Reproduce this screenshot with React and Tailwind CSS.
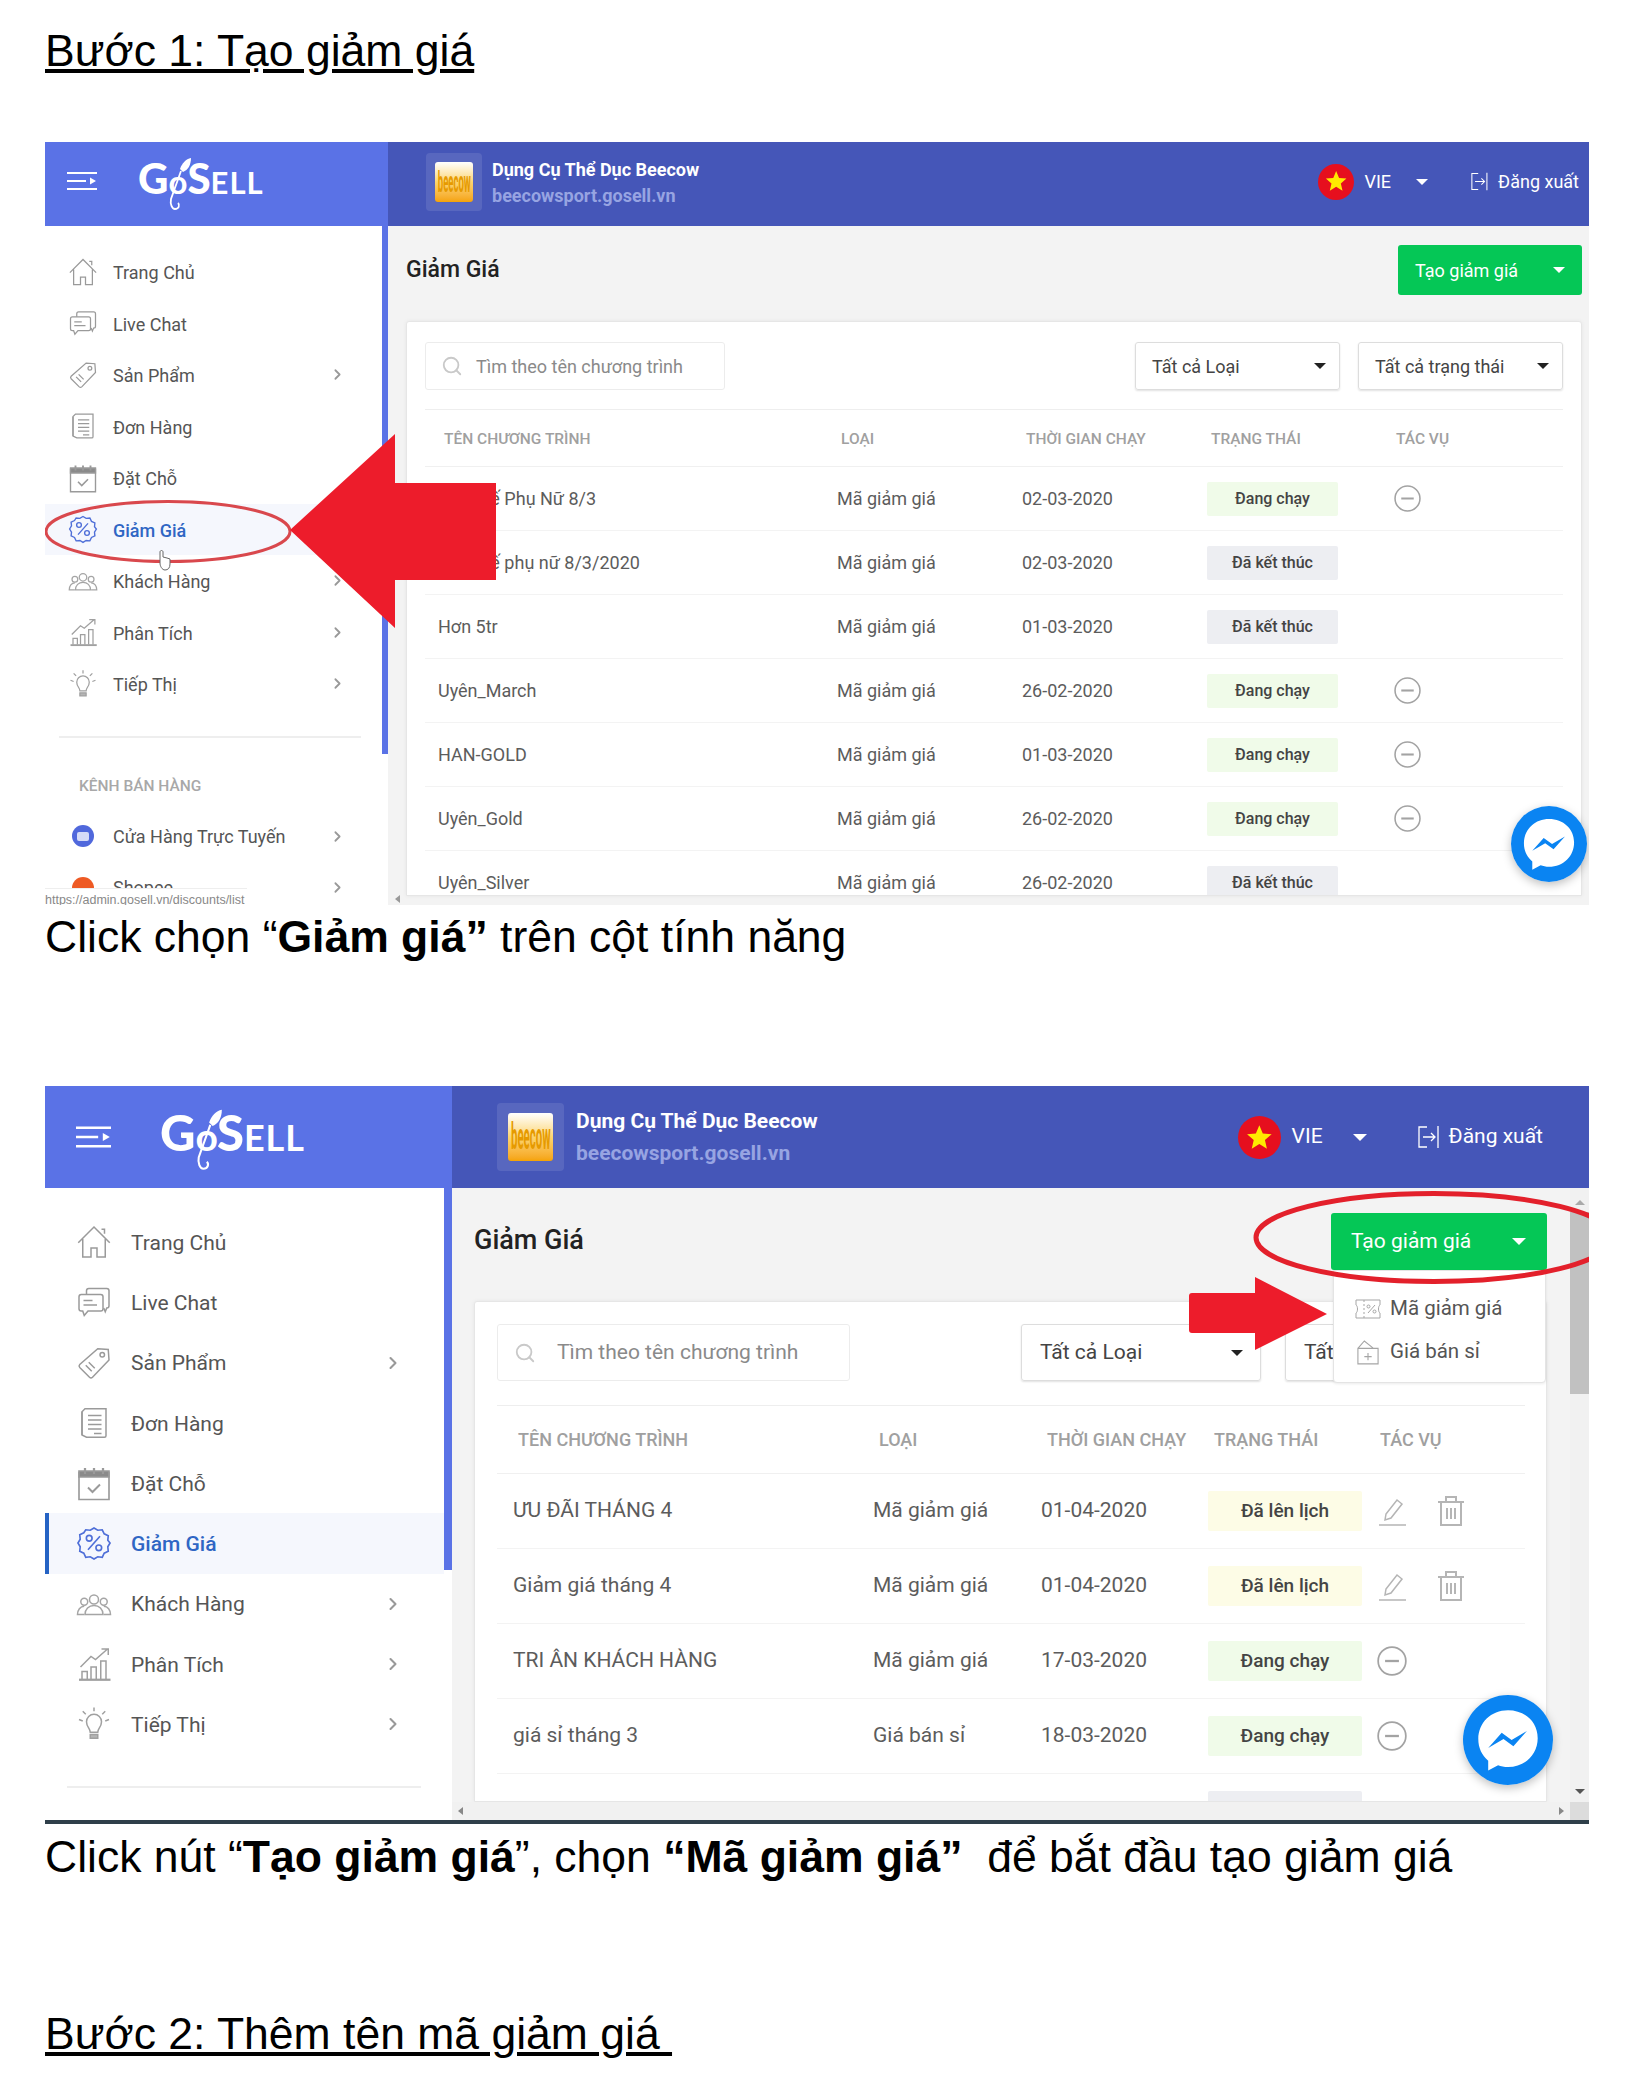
import React from 'react'
import { ChevronRight, Search } from 'lucide-react'

const roboto = "font-['Roboto',sans-serif]"

// the two screenshots are the same admin page at two zoom levels
const small = {
  shell: 'h-[763px]',
  header: 'h-[84px]',
  headerLeft: 'w-[343px]',
  burger: 'ml-[22px] w-[30px] h-[24px] mb-[6px]',
  logo: 'ml-[41px] w-[130px] mt-[2px]',
  g: 'text-[42px]', o: 'text-[33px]', ell: 'text-[31px] tracking-[1px]', rocket: 'w-[26px] h-[56px] -ml-[21px] -mr-[5px]',
  shopWrap: 'ml-[38px] w-[56px] h-[58px] mr-[10px] mb-[5px]',
  shopImg: 'w-[38px] h-[40px]', shopText: 'text-[10px]',
  shopName: 'text-[18px] leading-[26px] mb-[3px]',
  lang: 'mr-[10px] text-[18px] mb-[5px]',
  flag: 'w-[36px] h-[36px] mr-[10px]', caretHead: 'ml-[25px] mr-[42px]', logoutIcon: 'w-[18px] h-[19px] mr-[10px]',
  sidebar: 'w-[337px] pt-[20px]',
  bar: 'w-[6px] h-[528px]',
  row: 'h-[51.5px] text-[18px]',
  rowIcon: 'ml-[23px] mr-[15px] w-[30px] h-[30px]',
  rowText: 'pt-[2px]',
  chev: 'ml-auto mr-[36px] w-[17px] h-[17px]',
  sideList: 'w-[337px]',
  rule: 'ml-[14px] w-[302px] mt-[26px]',
  mainPad: 'pl-[18px] pr-[7px] pt-[19px] pb-[9px]',
  title: 'text-[23px]',
  button: 'w-[184px] h-[50px] text-[18px] pl-[17px] pr-[17px]',
  card: 'mt-[26px] pt-[20px]',
  cardInner: 'pl-[18px] pr-[18px]',
  controls: 'h-[48px] pb-0',
  search: 'w-[300px] text-[18px]',
  searchIcon: 'ml-[15px] mr-[13px] w-[22px] h-[22px]',
  select: 'w-[205px] ml-[18px] text-[18px] pl-[16px] pr-[13px]',
  headRule: 'mt-[19px]',
  headRow: 'h-[57px] pt-[3px] text-[15.5px] pl-[19px] grid-cols-[397px_185px_185px_185px_1fr]',
  bodyRow: 'h-[64px] text-[18px] pl-[13px] grid-cols-[399px_185px_185px_187px_1fr]',
  badge: 'w-[131px] h-[34px] text-[16px]',
  minus: 'w-[27px] h-[27px]',
  caretBig: 'border-x-[6px] border-t-[6px]',
}

const large = {
  shell: 'h-[734px]',
  header: 'h-[102px]',
  headerLeft: 'w-[407px]',
  burger: 'ml-[30px] w-[37px] h-[28px]',
  logo: 'ml-[48px] w-[152px] mt-[7px]',
  g: 'text-[49px]', o: 'text-[39px]', ell: 'text-[36px] tracking-[1px]', rocket: 'w-[30px] h-[66px] -ml-[25px] -mr-[6px]',
  shopWrap: 'ml-[45px] w-[67px] h-[68px] mr-[12px]',
  shopImg: 'w-[45px] h-[48px]', shopText: 'text-[12px]',
  shopName: 'text-[21px] leading-[32px]',
  lang: 'mr-[46px] text-[21px]',
  flag: 'w-[43px] h-[43px] mr-[11px]', caretHead: 'ml-[30px] mr-[50px]', logoutIcon: 'w-[22px] h-[24px] mr-[10px]',
  sidebar: 'w-[399px] pt-[24px]',
  bar: 'w-[8px] h-[382px]',
  row: 'h-[60.25px] text-[21px]',
  rowIcon: 'ml-[31px] mr-[19px] w-[36px] h-[36px]',
  rowText: 'pt-[3px]',
  chev: 'ml-auto mr-[41px] w-[20px] h-[20px]',
  sideList: 'w-[399px]',
  rule: 'ml-[22px] w-[354px] mt-[32px]',
  mainPad: 'pl-[22px] pr-[23px] pt-[25px]',
  title: 'text-[27px] -mt-[2px]',
  button: 'w-[216px] h-[57px] text-[21px] pl-[20px] pr-[21px]',
  card: 'mt-[31px] pt-[22px]',
  cardInner: 'pl-[22px] pr-[21px]',
  controls: 'h-[57px]',
  search: 'w-[353px] text-[21px]',
  searchIcon: 'ml-[16px] mr-[21px] w-[22px] h-[22px]',
  select: 'w-[240px] ml-[24px] text-[21px] pl-[18px] pr-[17px]',
  headRule: 'mt-[24px]',
  headRow: 'h-[68px] text-[18px] pl-[21px] grid-cols-[361px_168px_167px_166px_1fr]',
  bodyRow: 'h-[75px] text-[21px] pl-[16px] grid-cols-[360px_168px_167px_169px_1fr]',
  badge: 'w-[154px] h-[40px] text-[19px]',
  minus: 'w-[30px] h-[30px]',
  caretBig: 'border-x-[7px] border-t-[7px]',
}

function HomeIcon({ className }) {
  return <svg viewBox="0 0 24 24" fill="none" stroke="#9a9a9a" strokeWidth="1" className={className}><path d="M1.500 12.500 12 2l10.500 10.500M4.500 10v12h5.500v-6h4v6h5.500V10M17 3.500h2v3" /></svg>
}
function ChatIcon({ className }) {
  return <svg viewBox="0 0 24 24" fill="none" stroke="#9a9a9a" strokeWidth="1" className={className}><path d="M7 7V4.500A1.500 1.500 0 0 1 8.500 3h12A1.500 1.500 0 0 1 22 4.500v10a1.500 1.500 0 0 1-1.500 1.500l-1 2.500-1-2.500" /><path d="M3.500 7h13A1.500 1.500 0 0 1 18 8.500v8a1.500 1.500 0 0 1-1.500 1.500H8l-2.500 3-1-3h-1A1.500 1.500 0 0 1 2 16.500v-8A1.500 1.500 0 0 1 3.500 7Z" /><path d="M5 11h6M5 14h9" /></svg>
}
function TagIcon({ className }) {
  return <svg viewBox="0 0 24 24" fill="none" stroke="#9a9a9a" strokeWidth="1" className={className}><path d="M14.500 2.500 21.500 3l.5 7L11 21.500a1.500 1.500 0 0 1-2 0L2.500 15a1.500 1.500 0 0 1 0-2Z" /><circle cx="17.500" cy="6.500" r="1.500" /><path d="m6.500 13.500 4 4M8.500 11.500l4 4" /></svg>
}
function DocsIcon({ className }) {
  return <svg viewBox="0 0 24 24" fill="none" stroke="#9a9a9a" strokeWidth="1" className={className}><path d="M6 2.500h14v18a1 1 0 0 1-1 1H7l-3-1.500V4.500Z" /><path d="M4 4.500v15.500M8 7h9M8 10h9M8 13h9M8 16h9M12 19h5" /></svg>
}
function CalendarIcon({ className }) {
  return <svg viewBox="0 0 24 24" fill="none" stroke="#9a9a9a" strokeWidth="1.100" className={className}><path d="M2 5h20v18H2Z" /><path d="M2 4h20v4H2Z" fill="#8a8a8a" /><path d="M6 2v4M12 2v4M18 2v4" strokeWidth="1.500" /><path d="m8 15 3 3 5-5" strokeWidth="1.300" /></svg>
}
function PeopleIcon({ className }) {
  return <svg viewBox="0 0 24 24" fill="none" stroke="#a5a5a5" strokeWidth="1" className={className}><circle cx="12" cy="9" r="3" /><circle cx="5.500" cy="10.500" r="2.300" /><circle cx="18.500" cy="10.500" r="2.300" /><path d="M6 19c0-3.500 2.500-6 6-6s6 2.500 6 6Z" /><path d="M5.500 19H1c0-3 1.800-5.500 4.500-5.500M18.500 19H23c0-3-1.800-5.500-4.500-5.500" /></svg>
}
function ChartIcon({ className }) {
  return <svg viewBox="0 0 24 24" fill="none" stroke="#a0a0a0" strokeWidth="1" className={className}><path d="M2 22.500h21" strokeWidth="1.500" /><path d="M4 22v-5h3.500v5M10 22v-8h3.500v8M16.500 22V10H20v12" /><path d="m3 14 7-7 3 2 8-7M17 2h4.500v4" /></svg>
}
function BulbIcon({ className }) {
  return <svg viewBox="0 0 24 24" fill="none" stroke="#a0a0a0" strokeWidth="1" className={className}><path d="M9.500 17.500c0-2.500-2.500-3.500-2.500-7a5 5 0 0 1 10 0c0 3.500-2.500 4.500-2.500 7Z" /><path d="M9.500 19h5v2.500h-5Z" fill="#b5b5b5" /><path d="M12 1v2.500M4.500 3.500l2 2M19.500 3.500l-2 2M2 9l2.500 1M22 9l-2.500 1" /></svg>
}
function PercentIcon({ className }) {
  return (
    <svg viewBox="0 0 24 24" fill="none" stroke="#4f6fd8" strokeWidth="1.100" className={className}>
      <path d="M12 2l2.500 1.500 3-.3 1.300 2.700 2.700 1.300-.3 3L22.700 12l-1.500 2.500.3 3-2.700 1.300-1.300 2.700-3-.3L12 22.700l-2.500-1.500-3 .3-1.300-2.700-2.700-1.300.3-3L1.300 12l1.500-2.500-.3-3 2.700-1.300L6.500 3.200l3 .3Z" />
      <path d="m8 16.500 8-9" />
      <circle cx="8.800" cy="8.800" r="1.900" />
      <circle cx="15.200" cy="15.200" r="1.900" />
    </svg>
  )
}
function StoreDot({ className }) {
  return <div className={`${className} flex items-center justify-center`}><div className="w-[22px] h-[22px] rounded-full bg-[#5068dc] flex items-center justify-center"><div className="w-[12px] h-[9px] rounded-[2px] bg-[#d5dbf7]" /></div></div>
}
function ShopeeDot({ className }) {
  return <div className={`${className} flex items-center justify-center`}><div className="w-[22px] h-[22px] rounded-full bg-[#ee5a24]" /></div>
}

const menu = [
  ['Trang Chủ', HomeIcon, false],
  ['Live Chat', ChatIcon, false],
  ['Sản Phẩm', TagIcon, true],
  ['Đơn Hàng', DocsIcon, false],
  ['Đặt Chỗ', CalendarIcon, false],
  ['Giảm Giá', PercentIcon, false],
  ['Khách Hàng', PeopleIcon, true],
  ['Phân Tích', ChartIcon, true],
  ['Tiếp Thị', BulbIcon, true],
]

function Caret({ color = 'border-t-white', className = 'border-x-[6px] border-t-[6px]' }) {
  return <span className={`inline-block w-0 h-0 border-x-transparent ${className} ${color}`} />
}

function Logo({ s }) {
  return (
    <div className={`flex items-baseline text-white font-black font-['Lato',sans-serif] ${s.logo}`}>
      <span className={`${s.g} leading-none`}>G</span>
      <span className={`${s.o} leading-none font-bold`}>o</span>
      <svg viewBox="0 0 26 56" fill="none" className={`${s.rocket} self-center`}>
        <path d="M25 1c-5 1-9 5-11 11l3 3c5-2 8-7 8-14Z" fill="white" />
        <path d="M15 14 5 42c-1 5 1 10 4 10 4 0 5-4 3-6" stroke="white" strokeWidth="1.800" />
      </svg>
      <span className={`${s.g} leading-none`}>S</span>
      <span className={`${s.ell} leading-none font-bold`}>ELL</span>
    </div>
  )
}

function ShopLogo({ s }) {
  return (
    <div className={`${s.shopWrap} rounded-[4px] bg-white/10 flex items-center justify-center`}>
      <div className={`${s.shopImg} rounded-[3px] bg-gradient-to-b from-white via-[#fcd56e] to-[#f5a300] overflow-hidden flex items-center justify-center`}>
        <span className={`${s.shopText} font-bold text-[#e69a00] [transform:scale(0.95,3)]`}>beecow</span>
      </div>
    </div>
  )
}

function Header({ s }) {
  return (
    <div className={`${s.header} flex shrink-0 ${roboto}`}>
      <div className={`${s.headerLeft} bg-[#5a72e6] flex items-center`}>
        <svg viewBox="0 0 30 24" fill="none" stroke="white" strokeWidth="2.200" className={s.burger}>
          <path d="M0 4h30M0 12h19M0 20h30" />
          <path d="m23 8.500 6 3.500-6 3.500Z" fill="white" stroke="none" />
        </svg>
        <Logo s={s} />
      </div>
      <div className="flex-1 bg-[#4556b8] flex items-center">
        <ShopLogo s={s} />
        <div className={`${s.shopName} font-bold`}>
          <div className="text-white">Dụng Cụ Thể Dục Beecow</div>
          <div className="text-[#97a4e2]">beecowsport.gosell.vn</div>
        </div>
        <div className={`ml-auto flex items-center text-white ${s.lang}`}>
          <div className={`${s.flag} rounded-full bg-[#e60f1e] flex items-center justify-center`}>
            <svg viewBox="0 0 20 20" className="w-[62%] h-[62%]"><path d="m10 1 2.600 6.100 6.600.6-5 4.300 1.500 6.500L10 15l-5.700 3.500L5.800 12l-5-4.300 6.600-.6Z" fill="#ffeb00" /></svg>
          </div>
          <span>VIE</span>
          <span className={`${s.caretHead} flex`}><Caret className={s.caretBig} /></span>
          <svg viewBox="0 0 22 24" fill="none" stroke="white" strokeWidth="1.300" className={s.logoutIcon}>
            <path d="M10 2H2v20h8M21 1v22M6 12h12M14 8l4 4-4 4" />
          </svg>
          <span>Đăng xuất</span>
        </div>
      </div>
    </div>
  )
}

function Sidebar({ s, active, children }) {
  return (
    <div className={`${s.sidebar} shrink-0 bg-white overflow-hidden flex ${roboto}`}>
      <div className={s.sideList}>
        {menu.map(([label, Icon, more]) => {
          const on = label === 'Giảm Giá'
          return (
            <div key={label} className={`${s.row} flex items-center ${on ? 'bg-[#f5f7fd] text-[#2f66c4] font-medium' : 'text-[#555]'} ${on && active ? 'shadow-[inset_4px_0_0_#2563c4]' : ''}`}>
              <Icon className={`${s.rowIcon} shrink-0`} />
              <span className={s.rowText}>{label}</span>
              {more && <ChevronRight className={s.chev} color="#999" strokeWidth={2.500} />}
            </div>
          )
        })}
        <div className={`${s.rule} h-[2px] bg-[#eeeeee]`} />
        {children}
      </div>
    </div>
  )
}

function Badge({ status, s }) {
  const tone = {
    'Đang chạy': 'bg-[#f0fbe9]',
    'Đã kết thúc': 'bg-[#edeef2]',
    'Đã lên lịch': 'bg-[#fdfce6]',
  }[status]
  return <div className={`${s.badge} ${tone} rounded-[2px] flex items-center justify-center font-medium text-[#444]`}>{status}</div>
}

function Minus({ s }) {
  return (
    <svg viewBox="0 0 26 26" fill="none" stroke="#a3a3a3" strokeWidth="1.500" className={s.minus}>
      <circle cx="13" cy="13" r="12" />
      <path d="M7 13h12" strokeWidth="2" />
    </svg>
  )
}

function EditDelete() {
  return (
    <div className="flex items-center gap-[29px]">
      <svg viewBox="0 0 30 30" fill="none" stroke="#b5b5b5" strokeWidth="1.500" className="w-[30px] h-[30px]">
        <path d="m9 18 11-14 5 4-11 14-6 2ZM2 29h27" />
      </svg>
      <svg viewBox="0 0 30 30" fill="none" stroke="#b5b5b5" strokeWidth="2" className="w-[30px] h-[30px]">
        <path d="M2 6h26M10 6V1h10v5M5 6v23h20V6M11 12v11M19 12v11M15 12v11" />
      </svg>
    </div>
  )
}

function Panel({ s, rows, selectTwo }) {
  return (
    <div className={`${s.card} flex-1 min-h-0 overflow-hidden bg-white border border-[#e6e6e6] rounded-t-[3px] shadow-[0_0_4px_rgba(0,0,0,0.06)]`}>
      <div className={s.cardInner}>
        <div className={`${s.controls} flex`}>
          <div className={`${s.search} border border-[#ececec] rounded-[3px] flex items-center text-[#8a8a8a]`}>
            <Search className={s.searchIcon} color="#c9c9c9" strokeWidth={2} />
            <span>Tìm theo tên chương trình</span>
          </div>
          <div className={`${s.select} ml-auto border border-[#dddddd] rounded-[3px] shadow-[0_1px_2px_rgba(0,0,0,0.12)] flex items-center justify-between text-[#444]`}>
            <span>Tất cả Loại</span>
            <Caret color="border-t-[#222]" />
          </div>
          <div className={`${s.select} border border-[#dddddd] rounded-[3px] shadow-[0_1px_2px_rgba(0,0,0,0.12)] flex items-center justify-between text-[#444]`}>
            <span>{selectTwo}</span>
            <Caret color="border-t-[#222]" />
          </div>
        </div>
        <div className={`${s.headRule} h-[1px] bg-[#eeeeee]`} />
        <div className={`${s.headRow} grid items-center font-medium text-[#a0a0a0] border-b border-[#f0f0f0]`}>
          <span>TÊN CHƯƠNG TRÌNH</span>
          <span>LOẠI</span>
          <span>THỜI GIAN CHẠY</span>
          <span>TRẠNG THÁI</span>
          <span>TÁC VỤ</span>
        </div>
        {rows.map(([name, type, date, status, action], i) => (
          <div key={i} className={`${s.bodyRow} grid items-center text-[#5c5c5c] border-b border-[#f3f3f3]`}>
            <span>{name}</span>
            <span>{type}</span>
            <span>{date}</span>
            <Badge status={status} s={s} />
            <div className="flex items-center">
              {action === 'stop' && <Minus s={s} />}
              {action === 'edit' && <EditDelete />}
            </div>
          </div>
        ))}
      </div>
    </div>
  )
}

function Messenger({ className }) {
  return (
    <div className={`${className} absolute rounded-full shadow-[0_3px_10px_rgba(0,0,0,0.25)]`}>
      <svg viewBox="0 0 100 100" className="w-full h-full">
        <circle cx="50" cy="50" r="50" fill="#0a84f2" />
        <path d="M50 17C31 17 17 31 17 49c0 10 4 18 11 24v11l11-6c3 1 7 2 11 2 19 0 33-14 33-32S69 17 50 17Z" fill="white" />
        <path d="m28 59 15-17 11 8 17-10-15 17-11-8Z" fill="#0a84f2" />
      </svg>
    </div>
  )
}

const rowsOne = [
  ['Quốc tế Phụ Nữ 8/3', 'Mã giảm giá', '02-03-2020', 'Đang chạy', 'stop'],
  ['Quốc tế phụ nữ 8/3/2020', 'Mã giảm giá', '02-03-2020', 'Đã kết thúc'],
  ['Hơn 5tr', 'Mã giảm giá', '01-03-2020', 'Đã kết thúc'],
  ['Uyên_March', 'Mã giảm giá', '26-02-2020', 'Đang chạy', 'stop'],
  ['HAN-GOLD', 'Mã giảm giá', '01-03-2020', 'Đang chạy', 'stop'],
  ['Uyên_Gold', 'Mã giảm giá', '26-02-2020', 'Đang chạy', 'stop'],
  ['Uyên_Silver', 'Mã giảm giá', '26-02-2020', 'Đã kết thúc'],
]

const rowsTwo = [
  ['ƯU ĐÃI THÁNG 4', 'Mã giảm giá', '01-04-2020', 'Đã lên lịch', 'edit'],
  ['Giảm giá tháng 4', 'Mã giảm giá', '01-04-2020', 'Đã lên lịch', 'edit'],
  ['TRI ÂN KHÁCH HÀNG', 'Mã giảm giá', '17-03-2020', 'Đang chạy', 'stop'],
  ['giá sỉ tháng 3', 'Giá bán sỉ', '18-03-2020', 'Đang chạy', 'stop'],
  ['', '', '', 'Đã kết thúc'],
]

function TitleRow({ s }) {
  return (
    <div className="flex items-center justify-between shrink-0">
      <span className={`${s.title} font-medium text-[#222]`}>Giảm Giá</span>
      <div className={`${s.button} bg-[#05c756] rounded-[3px] text-white flex items-center justify-between`}>
        <span>Tạo giảm giá</span>
        <Caret className={s.caretBig} />
      </div>
    </div>
  )
}

function ShotOne() {
  const s = small
  return (
    <div className={`${s.shell} relative overflow-hidden flex flex-col`}>
      <Header s={s} />
      <div className={`flex-1 min-h-0 flex ${roboto}`}>
        <Sidebar s={s}>
          <div className="pl-[34px] pt-[40px] text-[15.5px] leading-[16px] font-medium text-[#a8a8a8]">KÊNH BÁN HÀNG</div>
          <div className={`${s.row} mt-[17px] flex items-center text-[#555]`}>
            <StoreDot className={`${s.rowIcon} shrink-0`} />
            <span>Cửa Hàng Trực Tuyến</span>
            <ChevronRight className={s.chev} color="#999" strokeWidth={2.500} />
          </div>
          <div className={`${s.row} flex items-center text-[#555]`}>
            <ShopeeDot className={`${s.rowIcon} shrink-0`} />
            <span>Shopee</span>
            <ChevronRight className={s.chev} color="#999" strokeWidth={2.500} />
          </div>
        </Sidebar>
        <div className={`${s.bar} bg-[#5a72e6] shrink-0`} />
        <div className={`flex-1 min-w-0 bg-[#f3f3f3] flex flex-col ${s.mainPad}`}>
          <TitleRow s={s} />
          <Panel s={s} rows={rowsOne} selectTwo="Tất cả trạng thái" />
        </div>
      </div>
      <div className="absolute left-0 bottom-0 w-[202px] h-[17px] bg-white border-t border-[#eeeeee] overflow-hidden text-[12.5px] leading-[22px] text-[#888] font-['Liberation_Sans',sans-serif]">https://admin.gosell.vn/discounts/list</div>
      <span className="absolute left-[350px] bottom-[2px] w-0 h-0 border-y-[4px] border-y-transparent border-r-[5px] border-r-[#999]" />
      <svg viewBox="0 0 1544 763" fill="none" className="absolute inset-0 w-full h-full">
        <ellipse cx="123" cy="389.500" rx="122" ry="30" stroke="#d9484d" strokeWidth="3" />
        <path d="M245 388 350 292v49h101v97H350v48Z" fill="#ed1c2b" />
        <path d="M115 410v11c0 3 2 7 5 7s5-2 5-6v-5l-3-1-4-1v-5c0-2-3-2-3 0Z" fill="white" stroke="#666" strokeWidth="1" />
      </svg>
      <Messenger className="left-[1466px] top-[664px] w-[76px] h-[76px]" />
    </div>
  )
}

function ShotTwo() {
  const s = large
  return (
    <div className={`${s.shell} relative overflow-hidden flex flex-col`}>
      <Header s={s} />
      <div className={`flex-1 min-h-0 flex ${roboto}`}>
        <Sidebar s={s} active />
        <div className={`${s.bar} bg-[#5a72e6] shrink-0`} />
        <div className="flex-1 min-w-0 flex flex-col">
          <div className={`flex-1 min-h-0 bg-[#f3f3f3] flex flex-col ${s.mainPad}`}>
            <TitleRow s={s} />
            <Panel s={s} rows={rowsTwo} selectTwo="Tất" />
          </div>
          <div className="h-[18px] shrink-0 bg-[#f1f1f1] flex items-center justify-between px-[6px]">
            <span className="w-0 h-0 border-y-[4px] border-y-transparent border-r-[5px] border-r-[#888]" />
            <span className="w-0 h-0 border-y-[4px] border-y-transparent border-l-[5px] border-l-[#888]" />
          </div>
        </div>
        <div className="w-[19px] shrink-0 bg-[#f1f1f1] flex flex-col items-center">
          <span className="mt-[12px] w-0 h-0 border-x-[5px] border-x-transparent border-b-[5px] border-b-[#aaa]" />
          <div className="mt-[7px] w-full h-[182px] bg-[#c1c1c1]" />
          <span className="mt-auto mb-[8px] w-0 h-0 border-x-[5px] border-x-transparent border-t-[5px] border-t-[#555]" />
          <div className="w-full h-[18px] bg-[#dcdcdc]" />
        </div>
      </div>
      <div className={`absolute left-[1288px] top-[184px] w-[213px] h-[113px] bg-white border border-[#e4e4e4] rounded-b-[4px] shadow-[0_1px_3px_rgba(0,0,0,0.08)] pt-[16px] text-[20.5px] text-[#555] ${roboto}`}>
        <div className="flex items-center h-[43px]">
          <svg viewBox="0 0 26 20" fill="none" stroke="#a5a5a5" strokeWidth="1" className="ml-[21px] mr-[9px] w-[26px] h-[20px]">
            <path d="M1 1h24v5c-2 1-2 7 0 8v5H1v-5c2-1 2-7 0-8Z" />
            <path d="M9 1v18" strokeDasharray="2 2" />
            <path d="m13 14 7-8" />
            <circle cx="13.500" cy="7.500" r="1.500" />
            <circle cx="19.500" cy="12.500" r="1.500" />
          </svg>
          <span>Mã giảm giá</span>
        </div>
        <div className="flex items-center h-[43px]">
          <svg viewBox="0 0 24 28" fill="none" stroke="#a5a5a5" strokeWidth="1.200" className="ml-[23px] mr-[11px] w-[22px] h-[28px]">
            <path d="M1 10h22v17H1ZM1 10l7-8 10 8" />
            <path d="M8 19h8M12 15v8" />
          </svg>
          <span>Giá bán sỉ</span>
        </div>
      </div>
      <svg viewBox="0 0 1544 734" fill="none" className="absolute inset-0 w-full h-full">
        <ellipse cx="1389" cy="151.500" rx="178" ry="44" stroke="#e3202b" strokeWidth="5" />
        <path d="M1147 207h63v-16l72 37-72 36v-17h-63a3 3 0 0 1-3-3v-34a3 3 0 0 1 3-3Z" fill="#ed1c2b" />
      </svg>
      <Messenger className="left-[1418px] top-[609px] w-[90px] h-[90px]" />
    </div>
  )
}

export default function App() {
  return (
    <div className="w-[1643px] h-[2090px] bg-white overflow-hidden pl-[45px] pr-[54px] font-['Liberation_Sans',sans-serif] text-[44.5px] text-black">
      <div className="pt-[28px] leading-[46px] underline">Bước 1: Tạo giảm giá</div>
      <div className="mt-[68px]">
        <ShotOne />
      </div>
      <div className="leading-[64px]">Click chọn “<b>Giảm giá”</b> trên cột tính năng</div>
      <div className="mt-[117px]">
        <ShotTwo />
        <div className="h-[4px] bg-[#2f3f4a]" />
      </div>
      <div className="leading-[66px]">Click nút “<b>Tạo giảm giá</b>”, chọn <b>“Mã giảm giá”</b>&nbsp; để bắt đầu tạo giảm giá</div>
      <div className="mt-[121px] leading-[46px] underline">Bước 2: Thêm tên mã giảm giá&nbsp;</div>
    </div>
  )
}
